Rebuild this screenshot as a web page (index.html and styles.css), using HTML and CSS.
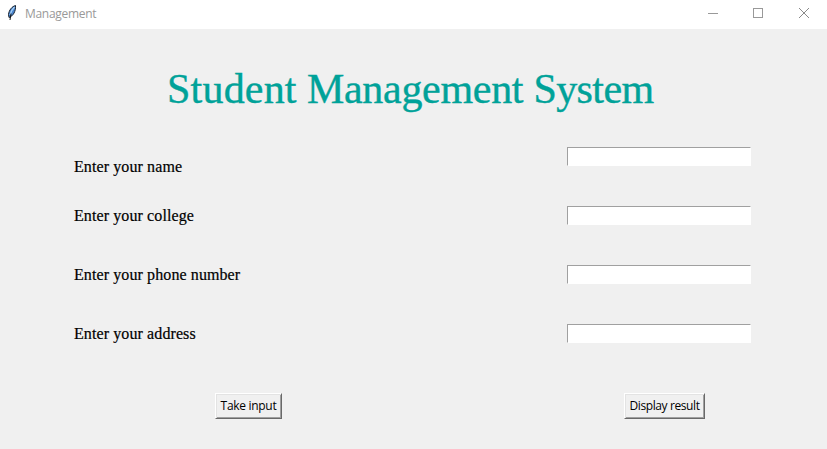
FILE: index.html
```html
<!DOCTYPE html>
<html lang="en">
<head>
<meta charset="utf-8">
<title>Management</title>
<link rel="stylesheet" href="styles.css">
</head>
<body>
<header class="titlebar">
  <svg class="feather" width="12" height="18" viewBox="0 0 12 18">
    <path d="M9.500 1.500C6 2.500 3 6 2.500 10.500L3 13.500C7 12 10 7.500 9.500 1.500Z" fill="#4a86cf" stroke="#17202c" stroke-width="1"/>
    <path d="M8.500 3C6 5.500 4.500 8.500 4 11" fill="none" stroke="#a5d0f8" stroke-width="1.300"/>
    <path d="M5 9.500L4 16" fill="none" stroke="#111" stroke-width="1"/>
  </svg>
  <span class="caption">Management</span>
  <svg class="controls" width="120" height="28" viewBox="0 0 120 28" fill="none" stroke="#999">
    <path d="M8 13.500H18M53.500 8.500H62.500V17.500H53.500Z" shape-rendering="crispEdges"/>
    <path d="M99 8L109 18M109 8L99 18" stroke="#8a8a8a"/>
  </svg>
</header>
<main>
  <h1><span class="student">Student</span> Management <span class="system">System</span></h1>
  <form class="fields">
    <label class="first" for="name">Enter your name</label><input id="name">
    <label for="college">Enter your college</label><input id="college">
    <label for="phone">Enter your phone number</label><input id="phone">
    <label for="address">Enter your address</label><input id="address">
  </form>
  <div class="actions">
    <button class="take" type="button">Take input</button>
    <button class="display" type="button">Display result</button>
  </div>
</main>
</body>
</html>
```
FILE: styles.css
```css
* { box-sizing: border-box; }
body { margin: 0; width: 827px; height: 449px; overflow: hidden; background: #f0f0f0; }
.titlebar { display: flex; height: 29px; background: #fff; padding-left: 6px; }
.feather { margin-top: 4px; }
.caption { margin-left: 7px; font: 12px/28px "Open Sans", sans-serif; color: #999; letter-spacing: -0.3px; }
.controls { margin-left: auto; margin-right: 7px; }
h1 { margin: 34px 0 0 167px; height: 52px; font: 400 42px/52px "Liberation Serif", serif; color: #00a299; letter-spacing: -0.3px; white-space: nowrap; -webkit-text-stroke: 0.4px #00a299; }
.student { letter-spacing: 0.2px; }
.system { letter-spacing: -0.6px; }
.fields { display: grid; grid-template-columns: 493px 184px; grid-auto-rows: 19px; row-gap: 40px; margin: 32px 0 0 74px; }
label { font: 16px/19px "Liberation Serif", serif; color: #000; white-space: nowrap; letter-spacing: 0.1px; -webkit-text-stroke: 0.2px #000; }
.first { padding-top: 10px; }
input { width: 184px; height: 19px; margin: 0; padding: 0 2px; background: #fff; border: 1px solid; border-color: #a0a0a0 #fff #fff #a0a0a0; border-radius: 0; outline: 0; }
.actions { display: flex; margin: 50px 0 0 215px; }
button { height: 26px; margin: 0; padding: 0; font: 12px/22px "Open Sans", sans-serif; letter-spacing: -0.3px; color: #000; background: #f0f0f0; border: 1px solid; border-color: #fff #696969 #696969 #fff; box-shadow: inset 1px 1px #e3e3e3, inset -1px -1px #a0a0a0; border-radius: 0; white-space: nowrap; }
.take { width: 67px; }
.display { width: 81px; margin-left: 342px; letter-spacing: -0.4px; }
```
